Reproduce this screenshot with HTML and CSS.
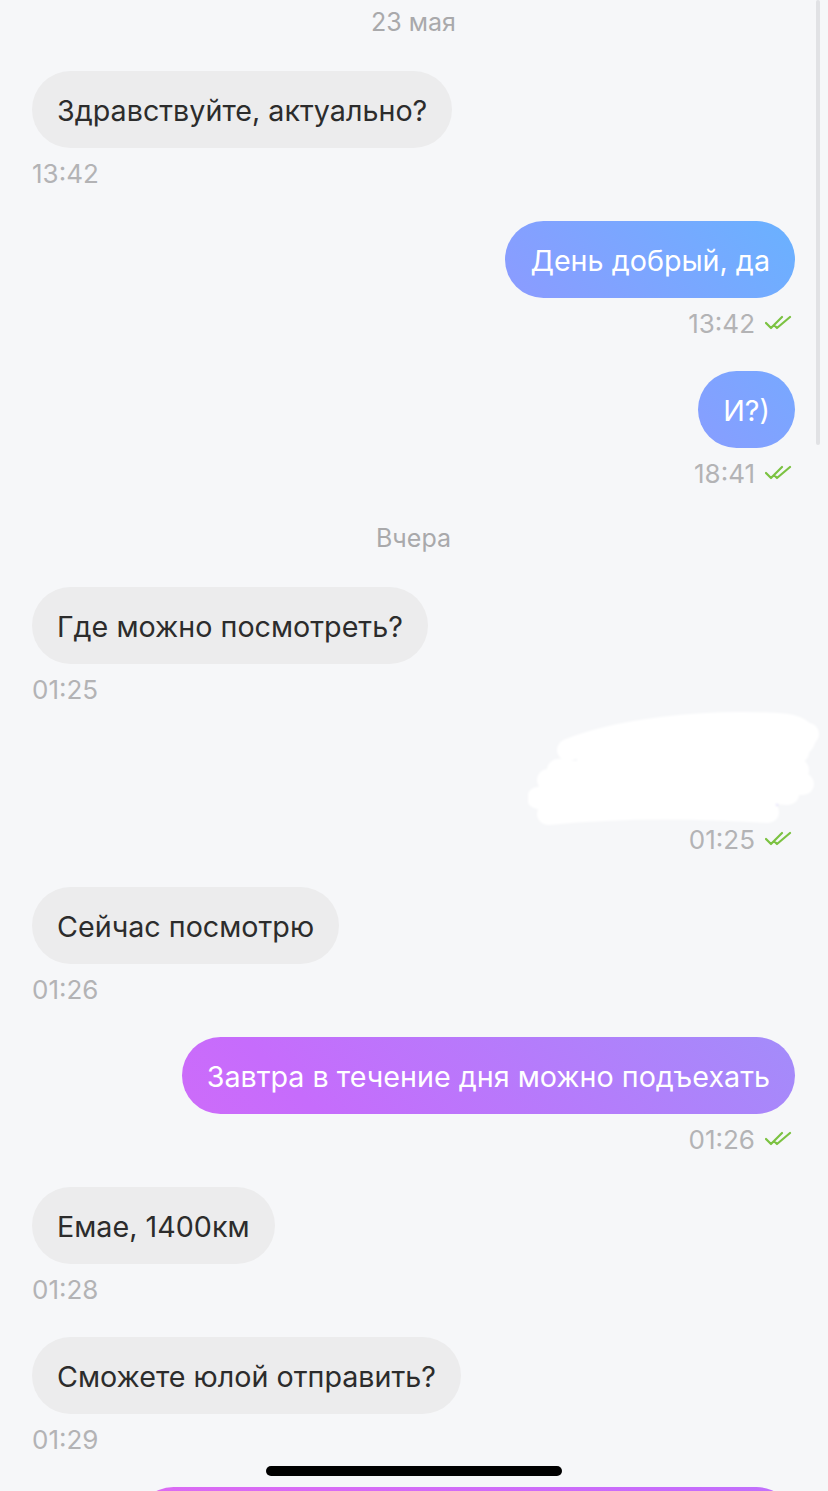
FILE: index.html
```html
<!DOCTYPE html>
<html lang="ru">
<head>
    <meta charset="UTF-8">
    <meta name="viewport" content="width=device-width, initial-scale=1.0">
    <title>Чат</title>
    <link rel="stylesheet" href="styles.css">
</head>
<body>

<div class="chat">
    <div class="day">23 мая</div>

    <div class="msg in">
        <div class="bubble">Здравствуйте, актуально?</div>
        <div class="meta">13:42</div>
    </div>

    <div class="msg out">
        <div class="bubble">День добрый, да</div>
        <div class="meta">13:42 <svg class="check" viewBox="0 0 30 18"><path d="M1 9 L6 14 L17 3 M9 11 L12 14 L25 3"/></svg></div>
    </div>

    <div class="msg out">
        <div class="bubble">И?)</div>
        <div class="meta">18:41 <svg class="check" viewBox="0 0 30 18"><path d="M1 9 L6 14 L17 3 M9 11 L12 14 L25 3"/></svg></div>
    </div>

    <div class="day">Вчера</div>

    <div class="msg in">
        <div class="bubble">Где можно посмотреть?</div>
        <div class="meta">01:25</div>
    </div>

    <div class="msg out">
        <div class="redacted">
            <svg class="scribble" viewBox="0 0 292 122">
                <path class="peek" d="M70 92 L200 90 M248 95 L252 88"/>
                <path d="M40 40 C90 20 170 10 250 14 C290 16 285 40 240 50 C180 62 90 60 30 66"/>
                <path d="M20 70 C90 58 180 56 270 60"/>
                <path d="M10 88 C90 80 180 78 260 84"/>
                <path d="M20 104 C100 96 180 98 240 102"/>
                <path d="M60 50 C120 42 200 38 270 42"/>
                <path d="M100 30 C160 20 220 18 280 24"/>
                <path d="M30 60 C100 70 200 72 275 74"/>
            </svg>
        </div>
        <div class="meta">01:25 <svg class="check" viewBox="0 0 30 18"><path d="M1 9 L6 14 L17 3 M9 11 L12 14 L25 3"/></svg></div>
    </div>

    <div class="msg in">
        <div class="bubble">Сейчас посмотрю</div>
        <div class="meta">01:26</div>
    </div>

    <div class="msg out">
        <div class="bubble">Завтра в течение дня можно подъехать</div>
        <div class="meta">01:26 <svg class="check" viewBox="0 0 30 18"><path d="M1 9 L6 14 L17 3 M9 11 L12 14 L25 3"/></svg></div>
    </div>

    <div class="msg in">
        <div class="bubble">Емае, 1400км</div>
        <div class="meta">01:28</div>
    </div>

    <div class="msg in">
        <div class="bubble">Сможете юлой отправить?</div>
        <div class="meta">01:29</div>
    </div>

    <div class="msg out">
        <div class="bubble cut">&nbsp;</div>
    </div>
</div>

<div class="scrollbar"></div>
<div class="home-indicator"></div>

</body>
</html>
```

FILE: styles.css
```css
html, body {
    height: 100%;
}
body {
    margin: 0;
    background-color: #f6f7f9;
    font-family: Inter, "Noto Sans", sans-serif;
    overflow: hidden;
    position: relative;
}
.chat {
    padding: 0 33px 0 32px;
    display: flex;
    flex-direction: column;
}
.day {
    height: 44px;
    line-height: 44px;
    text-align: center;
    font-size: 25px;
    color: #a9a9ab;
    margin-bottom: 27px;
}
.msg + .day {
    margin-top: -5px;
}
.msg {
    display: flex;
    flex-direction: column;
    margin-bottom: 33px;
}
.msg.in {
    align-items: flex-start;
}
.msg.out {
    align-items: flex-end;
}
.bubble {
    font-size: 28.7px;
    line-height: 33px;
    padding: 23px 25px 21px;
    border-radius: 39px;
    white-space: nowrap;
}
.in .bubble {
    background-color: #ececed;
    color: #2c2c2c;
}
.out .bubble {
    color: #fff;
    background-image: linear-gradient(225deg, #62b6ff 0%, #6cb0ff 12%, #8a9cff 26%, #a08ffa 44%, #c66cfc 70%, #d86bf5 86%, #dc6af2 100%);
    background-attachment: fixed;
}
.bubble.cut {
    width: 610px;
}
.meta {
    display: flex;
    align-items: center;
    gap: 10px;
    height: 30px;
    margin-top: 10px;
    font-size: 26px;
    color: #b3b3b5;
}
.check {
    width: 30px;
    height: 18px;
    fill: none;
    stroke: #7cc242;
    stroke-width: 2.2;
    stroke-linecap: round;
    stroke-linejoin: round;
}
.redacted {
    width: 265px;
    height: 77px;
    position: relative;
}
.scribble {
    position: absolute;
    right: -25px;
    top: -27px;
    width: 292px;
    height: 122px;
    fill: none;
    stroke: #fff;
    stroke-width: 22;
    stroke-linecap: round;
    filter: blur(1px);
}
.scribble .peek {
    stroke: #c9c2f4;
    stroke-width: 3;
}
.scrollbar {
    position: absolute;
    top: 0;
    right: 8px;
    width: 4px;
    height: 445px;
    border-radius: 2px;
    background-color: #e1e2e5;
}
.home-indicator {
    position: absolute;
    left: 266px;
    top: 1466px;
    width: 296px;
    height: 10px;
    border-radius: 5px;
    background-color: #000;
}
```
